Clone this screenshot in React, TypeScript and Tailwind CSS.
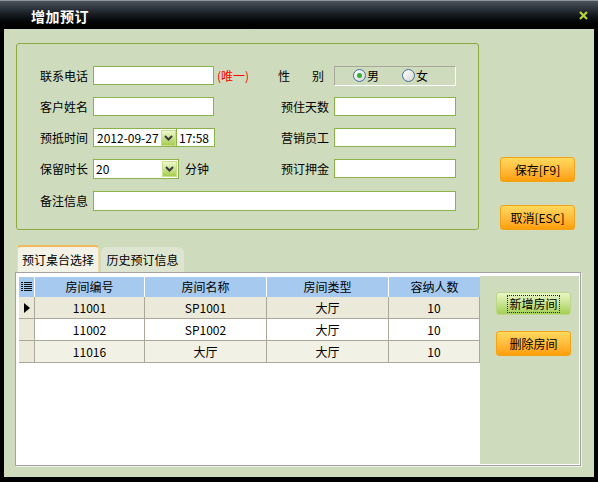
import { ReactNode } from "react";

const Input = ({ width, children }: { width: string; children?: ReactNode }) => (
  <div className={`${width} h-[19px] border border-[#8cb24a] bg-white flex items-center`}>
    {children}
  </div>
);

const DropButton = () => (
  <div className="w-[15px] h-[16px] border border-[#c8e08c] bg-gradient-to-b from-[#eef8cc] to-[#a6cc4c] flex items-center justify-center">
    <svg width="9" height="6" viewBox="0 0 9 6">
      <path d="M1 1 L4.5 4.5 L8 1" stroke="#3a3a3a" strokeWidth="2" fill="none" />
    </svg>
  </div>
);

const Radio = ({ checked }: { checked?: boolean }) => (
  <div className="w-[13px] h-[13px] rounded-full border border-[#3f6e9e] bg-gradient-to-br from-white to-[#d6d6d0] flex items-center justify-center">
    {checked ? <div className="w-[5px] h-[5px] rounded-full bg-[#2fb02f]" /> : null}
  </div>
);

const Label = ({ text }: { text: string }) => (
  <div className="w-[48px] whitespace-nowrap">{text}</div>
);

const OrangeButton = ({ children }: { children: ReactNode }) => (
  <div className="w-[75px] h-[25px] rounded-[3px] border border-[#f2a418] bg-gradient-to-b from-[#ffd95c] to-[#ff9e00] flex items-center justify-center">
    {children}
  </div>
);

const rows = [
  { no: "11001", name: "SP1001", type: "大厅", cap: "10", bg: "bg-[#ebe9da]", current: true },
  { no: "11002", name: "SP1002", type: "大厅", cap: "10", bg: "bg-white", current: false },
  { no: "11016", name: "大厅", type: "大厅", cap: "10", bg: "bg-[#f1f1e5]", current: false },
];

const cell = "border-r border-b border-[#aca899] flex items-center justify-center";

const App = () => {
  return (
    <div className="w-[598px] h-[482px] bg-black flex flex-col font-['Noto_Sans_CJK_SC',sans-serif] text-[12px] leading-none text-black select-none">
      {/* title bar */}
      <div className="h-[29px] shrink-0 border-t border-[#8f969e] bg-gradient-to-b from-[#4c545e] via-[#161b20] to-black flex items-center justify-between pl-[31px] pr-[10px]">
        <span className="text-white text-[14px] font-bold tracking-[0.5px] mt-[1px]">增加预订</span>
        <svg width="9" height="9" viewBox="0 0 9 9">
          <path d="M1 1 L8 8 M8 1 L1 8" stroke="#b6d63c" strokeWidth="2.2" />
        </svg>
      </div>

      {/* body */}
      <div className="flex-1 mx-[4px] mb-[5px] bg-[#cfdbbd] flex flex-col">
        <div className="flex pt-[14px] pl-[12px]">
          {/* group box */}
          <div className="w-[463px] h-[187px] border border-[#8aab3e] rounded-[3px] flex flex-col pt-[22px] pl-[23px] gap-[12px]">
            <div className="flex items-center h-[19px]">
              <Label text="联系电话" />
              <div className="ml-[5px] w-[188px] flex items-center">
                <Input width="w-[121px]" />
                <span className="ml-[3px] text-[#ff0000]">(唯一)</span>
              </div>
              <div className="w-[48px] -ml-[3px] pr-[2px] flex justify-between">
                <span>性</span>
                <span>别</span>
              </div>
              <div className="ml-[8px] w-[122px] h-[20px] border-t border-l border-[#a9a79b] border-b border-r border-b-white border-r-white flex items-center pl-[18px]">
                <Radio checked />
                <span className="ml-[1px]">男</span>
                <div className="ml-[23px]">
                  <Radio />
                </div>
                <span className="ml-[1px]">女</span>
              </div>
            </div>

            <div className="flex items-center h-[19px]">
              <Label text="客户姓名" />
              <div className="ml-[5px] w-[188px]">
                <Input width="w-[121px]" />
              </div>
              <Label text="预住天数" />
              <div className="ml-[5px]">
                <Input width="w-[122px]" />
              </div>
            </div>

            <div className="flex items-center h-[19px]">
              <Label text="预抵时间" />
              <div className="ml-[5px] w-[188px] flex">
                <div className="w-[84px] h-[19px] border border-[#8cb24a] bg-white flex items-center justify-between">
                  <span className="pl-[3px]">2012-09-27</span>
                  <DropButton />
                </div>
                <div className="w-[38px] h-[19px] border border-l-0 border-[#8cb24a] bg-white flex items-center">
                  <span className="pl-[2px]">17:58</span>
                </div>
              </div>
              <Label text="营销员工" />
              <div className="ml-[5px]">
                <Input width="w-[122px]" />
              </div>
            </div>

            <div className="flex items-center h-[19px]">
              <Label text="保留时长" />
              <div className="ml-[5px] w-[188px] flex items-center">
                <div className="w-[86px] h-[20px] border border-[#8cb24a] bg-white flex items-center justify-between pr-[1px]">
                  <span className="pl-[2px]">20</span>
                  <DropButton />
                </div>
                <span className="ml-[6px]">分钟</span>
              </div>
              <Label text="预订押金" />
              <div className="ml-[5px]">
                <Input width="w-[122px]" />
              </div>
            </div>

            <div className="flex items-center h-[20px] mt-[1px]">
              <Label text="备注信息" />
              <div className="ml-[5px]">
                <div className="w-[363px] h-[20px] border border-[#8cb24a] bg-white" />
              </div>
            </div>
          </div>

          {/* save / cancel */}
          <div className="ml-[21px] pt-[114px] flex flex-col gap-[23px]">
            <OrangeButton>保存[F9]</OrangeButton>
            <OrangeButton>取消[ESC]</OrangeButton>
          </div>
        </div>

        {/* tabs */}
        <div className="flex items-end mt-[15px] pl-[13px] h-[27px]">
          <div className="w-[82px] h-[27px] rounded-t-[4px] border-t-2 border-x border-t-[#f2b85a] border-x-[#efd9a4] bg-[#f2f2e6] flex items-center justify-center">
            预订桌台选择
          </div>
          <div className="w-[83px] h-[25px] ml-[2px] rounded-t-[6px] bg-[#dde5d1] flex items-center justify-center">
            历史预订信息
          </div>
        </div>

        {/* tab panel */}
        <div className="ml-[11px] w-[566px] h-[194px] border border-[#a2a2a2] bg-white pt-[3px] pr-[1px] pb-[1px] flex shadow-[1px_1px_0_#eef2e6]">
          <div className="w-[464px] pl-[3px] pt-[1px]">
            <div className="w-[461px]">
              <div className="grid grid-cols-[16px_110px_122px_122px_91px] h-[20px] bg-[#a6c9ef]">
                <div className="border-r border-white flex items-center justify-center">
                  <svg width="11" height="10" viewBox="0 0 11 10">
                    <path d="M0 0.5 H2 M3 0.5 H11 M0 2.5 H2 M3 2.5 H11 M0 4.5 H2 M3 4.5 H11 M0 6.5 H2 M3 6.5 H11 M0 8.5 H2 M3 8.5 H11" stroke="#111" strokeWidth="1" />
                  </svg>
                </div>
                <div className="border-r border-white flex items-center justify-center">房间编号</div>
                <div className="border-r border-white flex items-center justify-center">房间名称</div>
                <div className="border-r border-white flex items-center justify-center">房间类型</div>
                <div className="flex items-center justify-center">容纳人数</div>
              </div>
              {rows.map((r) => (
                <div key={r.no} className={`grid grid-cols-[16px_110px_122px_122px_91px] h-[22px] ${r.bg}`}>
                  <div className={`bg-[#ebe9da] ${cell}`}>
                    {r.current ? (
                      <svg width="6" height="10" viewBox="0 0 6 10">
                        <path d="M0 0 L6 5 L0 10 Z" fill="#000" />
                      </svg>
                    ) : null}
                  </div>
                  <div className={cell}>{r.no}</div>
                  <div className={cell}>{r.name}</div>
                  <div className={cell}>{r.type}</div>
                  <div className={cell}>{r.cap}</div>
                </div>
              ))}
            </div>
          </div>
          <div className="flex-1 bg-[#cfdbbd] flex flex-col pl-[16px] pt-[16px] gap-[16px]">
            <div className="w-[75px] h-[23px] rounded-[3px] border border-[#bcd68a] bg-gradient-to-b from-[#eaf6c6] to-[#a6cf52] flex items-center justify-center">
              <span className="border border-dotted border-[#1a1a80] px-[1px] py-[2px]">新增房间</span>
            </div>
            <OrangeButton>删除房间</OrangeButton>
          </div>
        </div>
      </div>
    </div>
  );
};

export default App;
